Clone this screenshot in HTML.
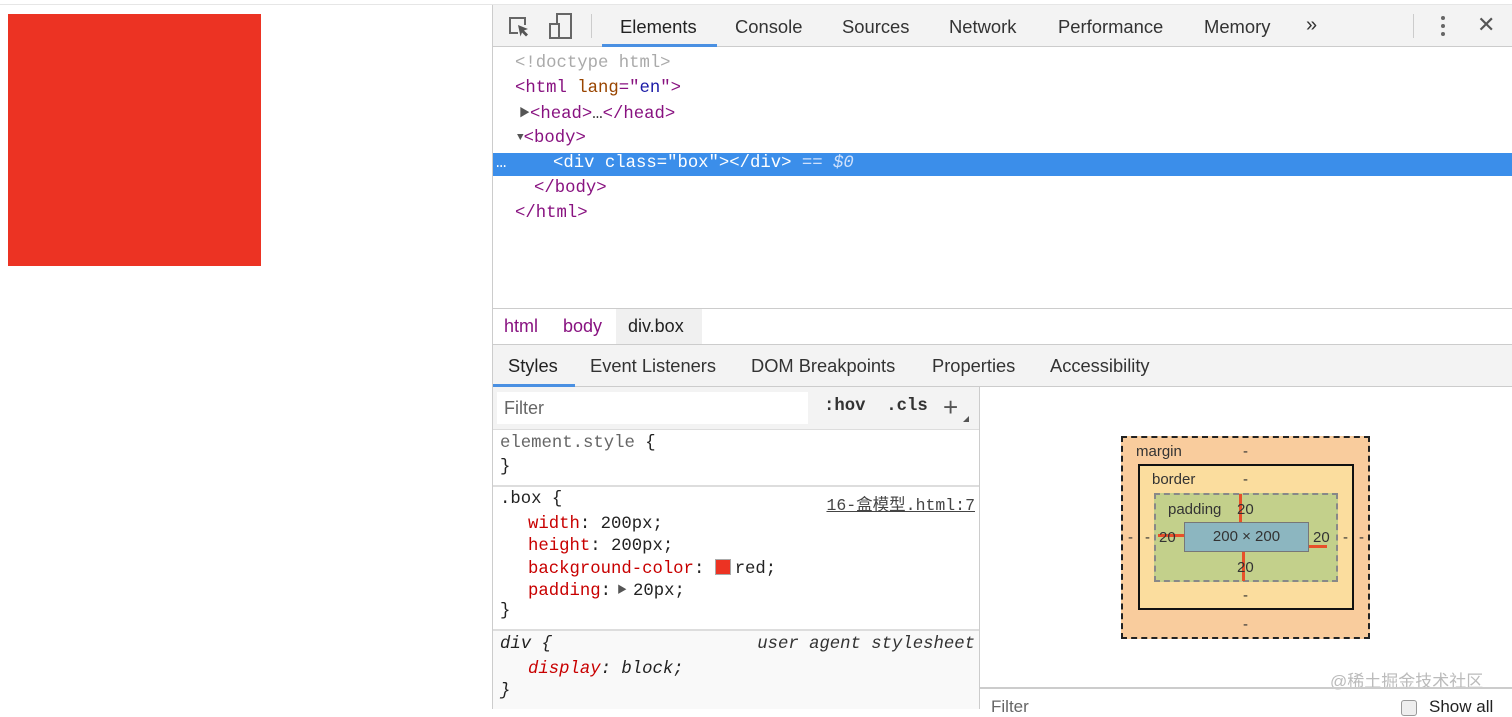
<!DOCTYPE html>
<html><head><meta charset="utf-8"><style>
*{margin:0;padding:0;box-sizing:border-box}
body{width:1512px;height:709px;overflow:hidden;background:#fff;position:relative;font-family:"Liberation Sans","Noto Sans CJK SC",sans-serif;color:#333}
.a{position:absolute}
.mono{font-family:"Liberation Mono","Noto Sans CJK SC",monospace;font-size:17.3px;white-space:pre}
.tag{color:#881280}.attr{color:#994500}.val{color:#1a1aa6}
.prop{color:#c80000}
.tab{position:absolute;font-size:18.4px;color:#333;top:16px}
</style></head><body>
<div class="a" style="left:0;top:4px;width:1512px;height:1px;background:#e6e6e6"></div>
<div class="a" style="left:8px;top:14px;width:253px;height:252px;background:#ec3323"></div>
<!-- devtools -->
<div class="a" style="left:492px;top:5px;width:1px;height:704px;background:#ccc"></div>
<div class="a" style="left:493px;top:5px;width:1019px;height:42px;background:#f3f3f3;border-bottom:1px solid #ccc"></div>
<svg class="a" style="left:506px;top:14px" width="26" height="26" viewBox="0 0 26 26"><path d="M12 19H4V4h15v7" fill="none" stroke="#666" stroke-width="2"/><path d="M12 11l10 4-4 1.5 4 4-2 2-4-4-1.5 4z" fill="#555"/></svg>
<svg class="a" style="left:548px;top:12px" width="26" height="28" viewBox="0 0 26 28"><rect x="9" y="2" width="14" height="24" fill="none" stroke="#666" stroke-width="2"/><rect x="2" y="12" width="9" height="14" fill="#f3f3f3" stroke="#666" stroke-width="2"/></svg>
<div class="a" style="left:591px;top:14px;width:1px;height:24px;background:#ccc"></div>
<div class="tab" style="left:620px;color:#222">Elements</div>
<div class="a" style="left:602px;top:44px;width:115px;height:3px;background:#4a90e2"></div>
<div class="tab" style="left:735px">Console</div>
<div class="tab" style="left:842px">Sources</div>
<div class="tab" style="left:949px">Network</div>
<div class="tab" style="left:1058px">Performance</div>
<div class="tab" style="left:1204px">Memory</div>
<div class="tab" style="left:1306px;font-size:20px;top:14px">»</div>
<div class="a" style="left:1413px;top:14px;width:1px;height:24px;background:#ccc"></div>
<div class="a" style="left:1441px;top:16px;width:4px;height:4px;border-radius:2px;background:#666;box-shadow:0 8px 0 #666,0 16px 0 #666"></div>
<div class="tab" style="left:1477px;font-size:22px;top:12px;color:#555">✕</div>
<!-- DOM -->
<div class="a mono" style="left:515px;top:54px;color:#aaa">&lt;!doctype html&gt;</div>
<div class="a mono" style="left:515px;top:79px"><span class="tag">&lt;html</span> <span class="attr">lang</span><span class="tag">="</span><span class="val">en</span><span class="tag">"&gt;</span></div>
<div class="a mono" style="left:519px;top:104px"><span style="color:#555;font-size:11px;vertical-align:2px">▶</span><span class="tag">&lt;head&gt;</span>…<span class="tag">&lt;/head&gt;</span></div>
<div class="a mono" style="left:517px;top:129px"><span style="color:#555;font-size:11px;vertical-align:2px">▼</span><span class="tag">&lt;body&gt;</span></div>
<div class="a" style="left:493px;top:153px;width:1019px;height:23px;background:#3b8eea"></div>
<div class="a mono" style="left:496px;top:154px;color:#fff">…</div>
<div class="a mono" style="left:553px;top:154px;color:#fff">&lt;div class="box"&gt;&lt;/div&gt; <span style="color:#cfe0fb">== <i>$0</i></span></div>
<div class="a mono" style="left:534px;top:179px"><span class="tag">&lt;/body&gt;</span></div>
<div class="a mono" style="left:515px;top:204px"><span class="tag">&lt;/html&gt;</span></div>
<!-- breadcrumb -->
<div class="a" style="left:493px;top:308px;width:1019px;height:1px;background:#ccc"></div>
<div class="a" style="left:616px;top:309px;width:86px;height:35px;background:#f0f0f0"></div>
<div class="a" style="left:504px;top:316px;font-size:18px;color:#881280">html</div>
<div class="a" style="left:563px;top:316px;font-size:18px;color:#881280">body</div>
<div class="a" style="left:628px;top:316px;font-size:18px;color:#222">div.box</div>
<div class="a" style="left:493px;top:344px;width:1019px;height:43px;background:#f3f3f3;border-top:1px solid #ccc;border-bottom:1px solid #ccc"></div>
<div class="a" style="left:508px;top:355px;font-size:18.3px;color:#222">Styles</div>
<div class="a" style="left:493px;top:384px;width:82px;height:3px;background:#4a90e2"></div>
<div class="a" style="left:590px;top:355px;font-size:18.3px">Event Listeners</div>
<div class="a" style="left:751px;top:355px;font-size:18.3px">DOM Breakpoints</div>
<div class="a" style="left:932px;top:355px;font-size:18.3px">Properties</div>
<div class="a" style="left:1050px;top:355px;font-size:18.3px">Accessibility</div>
<!-- styles pane -->
<div class="a" style="left:979px;top:387px;width:1px;height:322px;background:#ccc"></div>
<div class="a" style="left:493px;top:387px;width:486px;height:43px;background:#f3f3f3;border-bottom:1px solid #ddd"></div>
<div class="a" style="left:497px;top:392px;width:311px;height:32px;background:#fff"></div>
<div class="a" style="left:504px;top:398px;font-size:18px;color:#666">Filter</div>
<div class="a mono" style="left:824px;top:397px;font-size:17.3px;font-weight:bold;color:#333">:hov  .cls</div>
<div class="a" style="left:943px;top:392px;font-size:26px;color:#555">+</div>
<div class="a" style="left:963px;top:416px;width:0;height:0;border-left:6px solid transparent;border-bottom:6px solid #555"></div>
<div class="a mono" style="left:500px;top:434px;color:#666">element.style <span style="color:#222">{</span></div>
<div class="a mono" style="left:500px;top:458px;color:#222">}</div>
<div class="a" style="left:493px;top:485px;width:486px;height:2px;background:#ddd"></div>
<div class="a mono" style="left:500px;top:490px;color:#222">.box {</div>
<div class="a mono" style="right:537px;top:491px;color:#444;text-decoration:underline;font-size:16.5px">16-盒模型.html:7</div>
<div class="a mono" style="left:528px;top:515px;color:#222"><span class="prop">width</span>: 200px;</div>
<div class="a mono" style="left:528px;top:537px;color:#222"><span class="prop">height</span>: 200px;</div>
<div class="a mono" style="left:528px;top:559px;color:#222"><span class="prop">background-color</span>: <span style="display:inline-block;width:16px;height:16px;background:#ec3323;border:1px solid #aaa;vertical-align:-2px;margin-right:4px"></span>red;</div>
<div class="a mono" style="left:528px;top:581px;color:#222"><span class="prop">padding</span>:<span style="font-size:10px;color:#555;vertical-align:2px"> ▶ </span>20px;</div>
<div class="a mono" style="left:500px;top:602px;color:#222">}</div>
<div class="a" style="left:493px;top:629px;width:486px;height:80px;background:#f9f9f9;border-top:2px solid #ddd"></div>
<div class="a mono" style="left:500px;top:635px;color:#222;font-style:italic">div {</div>
<div class="a mono" style="right:537px;top:635px;color:#333;font-style:italic">user agent stylesheet</div>
<div class="a mono" style="left:528px;top:660px;color:#222;font-style:italic"><span class="prop">display</span>: block;</div>
<div class="a mono" style="left:500px;top:682px;color:#222;font-style:italic">}</div>
<!-- box model -->
<div class="a" style="left:1121px;top:436px;width:249px;height:203px;background:#f9cc9d;border:2px dashed #222"></div>
<div class="a" style="left:1136px;top:443px;font-size:15px">margin</div>
<div class="a" style="left:1138px;top:464px;width:216px;height:146px;background:#fbdd9e;border:2px solid #111"></div>
<div class="a" style="left:1152px;top:471px;font-size:15px">border</div>
<div class="a" style="left:1154px;top:493px;width:184px;height:89px;background:#c3d08b;border:2px dashed #888"></div>
<div class="a" style="left:1168px;top:501px;font-size:15px">padding</div>
<div class="a" style="left:1184px;top:522px;width:125px;height:30px;background:#8cb6c0;border:1px solid #777;text-align:center;font-size:15px;line-height:28px">200 × 200</div>
<div class="a" style="left:1239px;top:494px;width:3px;height:28px;background:#e8502a"></div>
<div class="a" style="left:1242px;top:552px;width:3px;height:29px;background:#e8502a"></div>
<div class="a" style="left:1158px;top:534px;width:26px;height:3px;background:#e8502a"></div>
<div class="a" style="left:1309px;top:545px;width:18px;height:3px;background:#e8502a"></div>
<div class="a" style="left:1237px;top:501px;font-size:15px">20</div>
<div class="a" style="left:1237px;top:559px;font-size:15px">20</div>
<div class="a" style="left:1159px;top:529px;font-size:15px">20</div>
<div class="a" style="left:1313px;top:529px;font-size:15px">20</div>
<div class="a" style="left:1243px;top:443px;font-size:15px">-</div>
<div class="a" style="left:1243px;top:471px;font-size:15px">-</div>
<div class="a" style="left:1243px;top:587px;font-size:15px">-</div>
<div class="a" style="left:1243px;top:616px;font-size:15px">-</div>
<div class="a" style="left:1128px;top:529px;font-size:15px">-</div>
<div class="a" style="left:1145px;top:529px;font-size:15px">-</div>
<div class="a" style="left:1343px;top:529px;font-size:15px">-</div>
<div class="a" style="left:1359px;top:529px;font-size:15px">-</div>
<div class="a" style="left:1330px;top:667px;font-size:17px;color:#bbb">@稀土掘金技术社区</div>
<div class="a" style="left:980px;top:687px;width:532px;height:2px;background:#ccc"></div>
<div class="a" style="left:991px;top:697px;font-size:17px;color:#666">Filter</div>
<div class="a" style="left:1401px;top:700px;width:16px;height:16px;border:1px solid #999;border-radius:3px;background:#eee"></div>
<div class="a" style="left:1429px;top:697px;font-size:17px;color:#222">Show all</div>
</body></html>
